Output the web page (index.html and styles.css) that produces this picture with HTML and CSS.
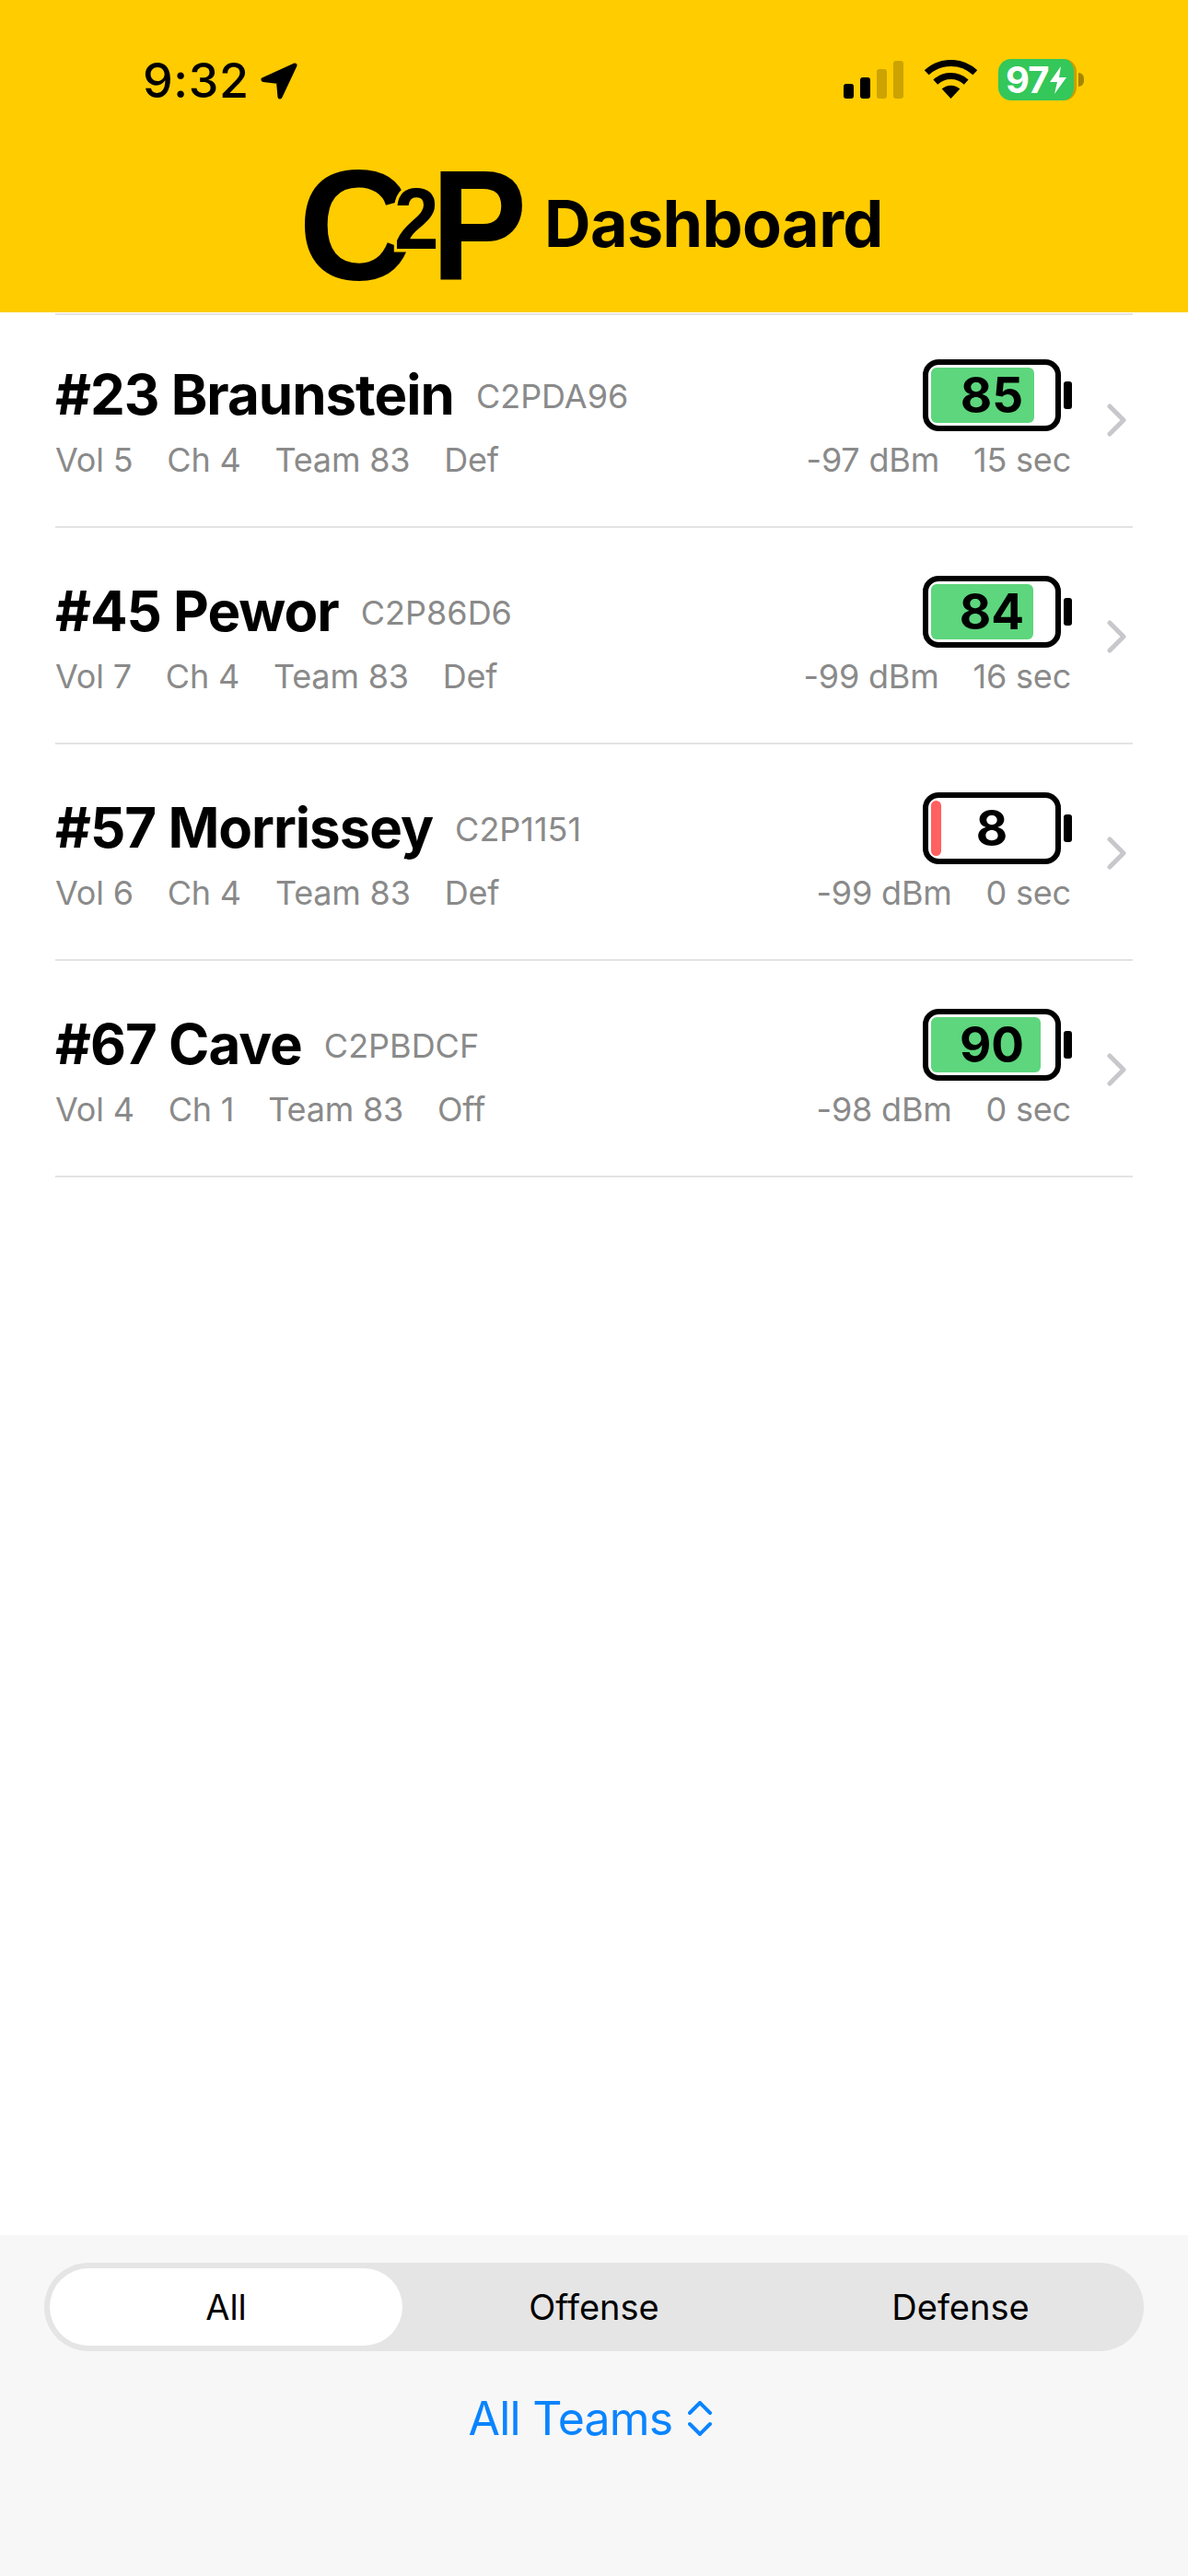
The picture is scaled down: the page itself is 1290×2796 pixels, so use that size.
FILE: index.html
```html
<!DOCTYPE html>
<html lang="en">
<head>
<meta charset="utf-8">
<title>C2P Dashboard</title>
<link rel="stylesheet" href="styles.css">
</head>
<body>
<div class="app">
  <header class="header">
    <div class="status">
      <div class="status-left">
        <span class="time">9:32</span>
        <svg class="loc" viewBox="0 0 42 42"><path d="M38 4 4 19.500 20.500 21.500 22 38Z" fill="#000" stroke="#000" stroke-width="5" stroke-linejoin="round"/></svg>
      </div>
      <div class="status-right">
        <div class="signal"><i class="b1"></i><i class="b2"></i><i class="b3"></i><i class="b4"></i></div>
        <svg class="wifi" viewBox="0 0 57 42"><path d="M2.200 13.800A38.500 38.500 0 0 1 54.800 13.800M11.800 24.100A24.500 24.500 0 0 1 45.200 24.100" fill="none" stroke="#000" stroke-width="7"/><path d="M28.500 42 18.700 31.500A14.400 14.400 0 0 1 38.300 31.500Z" fill="#000"/></svg>
        <div class="sbat">
          <div class="sbat-body">
            <span class="sbat-num">97</span>
            <svg class="bolt" viewBox="0 0 20 30"><path d="M13 0 1 17H9L6 30 19 12H11Z" fill="#fff"/></svg>
          </div>
          <i class="sbat-nub"></i>
        </div>
      </div>
    </div>
    <div class="brand">
      <svg class="logo" viewBox="0 0 250 196" aria-label="C2P">
        <text class="logo-big" x="2" y="160">C</text>
        <text class="logo-small" transform="translate(106 127) scale(.92 1)">2</text>
        <text class="logo-big" transform="translate(146 160) scale(.92 1)">P</text>
      </svg>
      <span class="title">Dashboard</span>
    </div>
  </header>

  <main class="list">
    <div class="top-rule"></div>

    <div class="row">
      <div class="info">
        <div class="name-line"><span class="name">#23 Braunstein</span><span class="code">C2PDA96</span></div>
        <div class="meta"><span>Vol 5</span><span>Ch 4</span><span>Team 83</span><span>Def</span></div>
      </div>
      <div class="stats">
        <div class="battery"><div class="cell"><div class="fill" style="width:85%"></div><span class="pct">85</span></div><i class="nub"></i></div>
        <div class="meta meta-right"><span>-97 dBm</span><span>15 sec</span></div>
      </div>
      <svg class="chev" viewBox="0 0 21 36"><path d="M3 3 18 18 3 33" fill="none" stroke="#c7c7cc" stroke-width="5" stroke-linecap="round" stroke-linejoin="round"/></svg>
    </div>

    <div class="row">
      <div class="info">
        <div class="name-line"><span class="name">#45 Pewor</span><span class="code">C2P86D6</span></div>
        <div class="meta"><span>Vol 7</span><span>Ch 4</span><span>Team 83</span><span>Def</span></div>
      </div>
      <div class="stats">
        <div class="battery"><div class="cell"><div class="fill" style="width:84%"></div><span class="pct">84</span></div><i class="nub"></i></div>
        <div class="meta meta-right"><span>-99 dBm</span><span>16 sec</span></div>
      </div>
      <svg class="chev" viewBox="0 0 21 36"><path d="M3 3 18 18 3 33" fill="none" stroke="#c7c7cc" stroke-width="5" stroke-linecap="round" stroke-linejoin="round"/></svg>
    </div>

    <div class="row">
      <div class="info">
        <div class="name-line"><span class="name">#57 Morrissey</span><span class="code">C2P1151</span></div>
        <div class="meta"><span>Vol 6</span><span>Ch 4</span><span>Team 83</span><span>Def</span></div>
      </div>
      <div class="stats">
        <div class="battery"><div class="cell"><div class="fill fill-low" style="width:8%"></div><span class="pct">8</span></div><i class="nub"></i></div>
        <div class="meta meta-right"><span>-99 dBm</span><span>0 sec</span></div>
      </div>
      <svg class="chev" viewBox="0 0 21 36"><path d="M3 3 18 18 3 33" fill="none" stroke="#c7c7cc" stroke-width="5" stroke-linecap="round" stroke-linejoin="round"/></svg>
    </div>

    <div class="row">
      <div class="info">
        <div class="name-line"><span class="name">#67 Cave</span><span class="code">C2PBDCF</span></div>
        <div class="meta"><span>Vol 4</span><span>Ch 1</span><span>Team 83</span><span>Off</span></div>
      </div>
      <div class="stats">
        <div class="battery"><div class="cell"><div class="fill" style="width:90%"></div><span class="pct">90</span></div><i class="nub"></i></div>
        <div class="meta meta-right"><span>-98 dBm</span><span>0 sec</span></div>
      </div>
      <svg class="chev" viewBox="0 0 21 36"><path d="M3 3 18 18 3 33" fill="none" stroke="#c7c7cc" stroke-width="5" stroke-linecap="round" stroke-linejoin="round"/></svg>
    </div>
  </main>

  <footer class="footer">
    <div class="segments">
      <div class="seg seg-on"><span>All</span></div>
      <div class="seg"><span>Offense</span></div>
      <div class="seg"><span>Defense</span></div>
    </div>
    <div class="picker">
      <span>All Teams</span>
      <svg class="updown" viewBox="0 0 26 38"><path d="M2 13 13 2 24 13M2 25 13 36 24 25" fill="none" stroke="#0a84ff" stroke-width="4" stroke-linecap="round" stroke-linejoin="round"/></svg>
    </div>
  </footer>
</div>
</body>
</html>
```

FILE: styles.css
```css
* { box-sizing: border-box; }
html, body { margin: 0; padding: 0; }
body { background: #fff; font-family: Inter, "Liberation Sans", sans-serif; color: #000; }
.app { width: 1290px; height: 2796px; display: flex; flex-direction: column; }

.header { height: 339px; background: #ffcc00; display: flex; flex-direction: column; flex: none; }
.status { display: flex; justify-content: space-between; height: 110px; padding: 64px 113px 0 155px; }
.status-left { display: flex; align-items: flex-start; gap: 11px; }
.time { font-size: 52px; line-height: 48px; font-weight: 500; letter-spacing: .6px; height: 48px; }
.loc { width: 42px; height: 42px; margin-top: 3px; }
.status-right { display: flex; align-items: flex-start; }
.signal { display: flex; align-items: flex-end; gap: 7px; height: 41px; margin-top: 2px; }
.signal i { display: block; width: 11px; border-radius: 3px; background: #000; }
.signal .b1 { height: 16px; }
.signal .b2 { height: 23px; }
.signal .b3 { height: 32px; opacity: .2; }
.signal .b4 { height: 41px; opacity: .2; }
.wifi { width: 57px; height: 42px; margin: 1px 23px 0 23px; }
.sbat { display: flex; align-items: center; height: 45px; }
.sbat-body { width: 85px; height: 45px; border-radius: 14px; background: #34c759; border-right: 3px solid #c79f05; display: flex; align-items: center; padding-left: 8px; gap: 1px; }
.sbat-num { color: #fff; font-weight: 700; font-size: 40px; letter-spacing: -1px; line-height: 45px; }
.bolt { width: 20px; height: 30px; flex: none; }
.sbat-nub { display: block; width: 6px; height: 15px; border-radius: 0 8px 8px 0; background: #a38500; margin-left: 2px; }

.brand { display: flex; align-items: flex-start; height: 196px; margin-top: 33px; padding-left: 322px; }
.logo { width: 250px; height: 196px; flex: none; }
.logo-big { font-family: "Liberation Sans", Arial, sans-serif; font-weight: 700; font-size: 170px; }
.logo-small { font-family: "Liberation Sans", Arial, sans-serif; font-weight: 700; font-size: 95px; stroke: #ffcc00; stroke-width: 7px; paint-order: stroke; }
.title { font-size: 70px; font-weight: 700; letter-spacing: -.6px; margin: 60px 0 0 19px; line-height: 80px; }

.list { flex: 1; padding: 0 60px; background: #fff; }
.top-rule { height: 2px; margin-top: 1px; background: #e3e3e3; }
.row { height: 235px; border-bottom: 2px solid #e3e3e3; display: flex; align-items: flex-end; padding-bottom: 52px; }
.row:nth-child(2) { height: 231px; }
.info { flex: 1; display: flex; flex-direction: column; }
.name-line { display: flex; align-items: center; gap: 24px; height: 76px; margin-bottom: 2px; }
.name { font-size: 60px; font-weight: 700; letter-spacing: -1px; line-height: 76px; }
.code { font-size: 36px; color: #8a8a8a; line-height: 40px; padding-top: 4px; }
.meta { display: flex; gap: 37px; font-size: 36px; letter-spacing: -.2px; color: #8a8a8a; line-height: 40px; margin-top: 11px; }
.stats { display: flex; flex-direction: column; align-items: flex-end; width: 320px; }
.meta-right { margin-right: 1px; }
.battery { display: flex; align-items: center; gap: 3px; }
.cell { position: relative; width: 150px; height: 78px; border: 6px solid #000; border-radius: 17px; padding: 3px; }
.fill { height: 100%; border-radius: 6px; background: #5dd67d; }
.fill-low { background: #ff6060; }
.pct { position: absolute; inset: 0; display: flex; align-items: center; justify-content: center; font-size: 53px; font-weight: 700; line-height: 1; }
.nub { display: block; width: 9px; height: 30px; border-radius: 3px; background: #000; }
.chev { width: 21px; height: 36px; flex: none; margin: 0 7px 45px 38px; }

.footer { flex: none; height: 370px; background: #f7f7f7; padding: 30px 48px 0; display: flex; flex-direction: column; align-items: stretch; }
.segments { height: 96px; width: 1194px; border-radius: 48px; background: #e5e5e6; display: grid; grid-template-columns: repeat(3, 398px); }
.seg { display: flex; align-items: center; justify-content: center; font-size: 38px; }
.seg-on { background: #fff; margin: 6px 9px 6px 6px; border-radius: 42px; }
.picker { display: flex; justify-content: center; align-items: center; gap: 17px; margin-top: 43px; padding-right: 8px; color: #0a84ff; font-size: 50px; letter-spacing: -.8px; line-height: 60px; }
.updown { width: 26px; height: 38px; }
```
